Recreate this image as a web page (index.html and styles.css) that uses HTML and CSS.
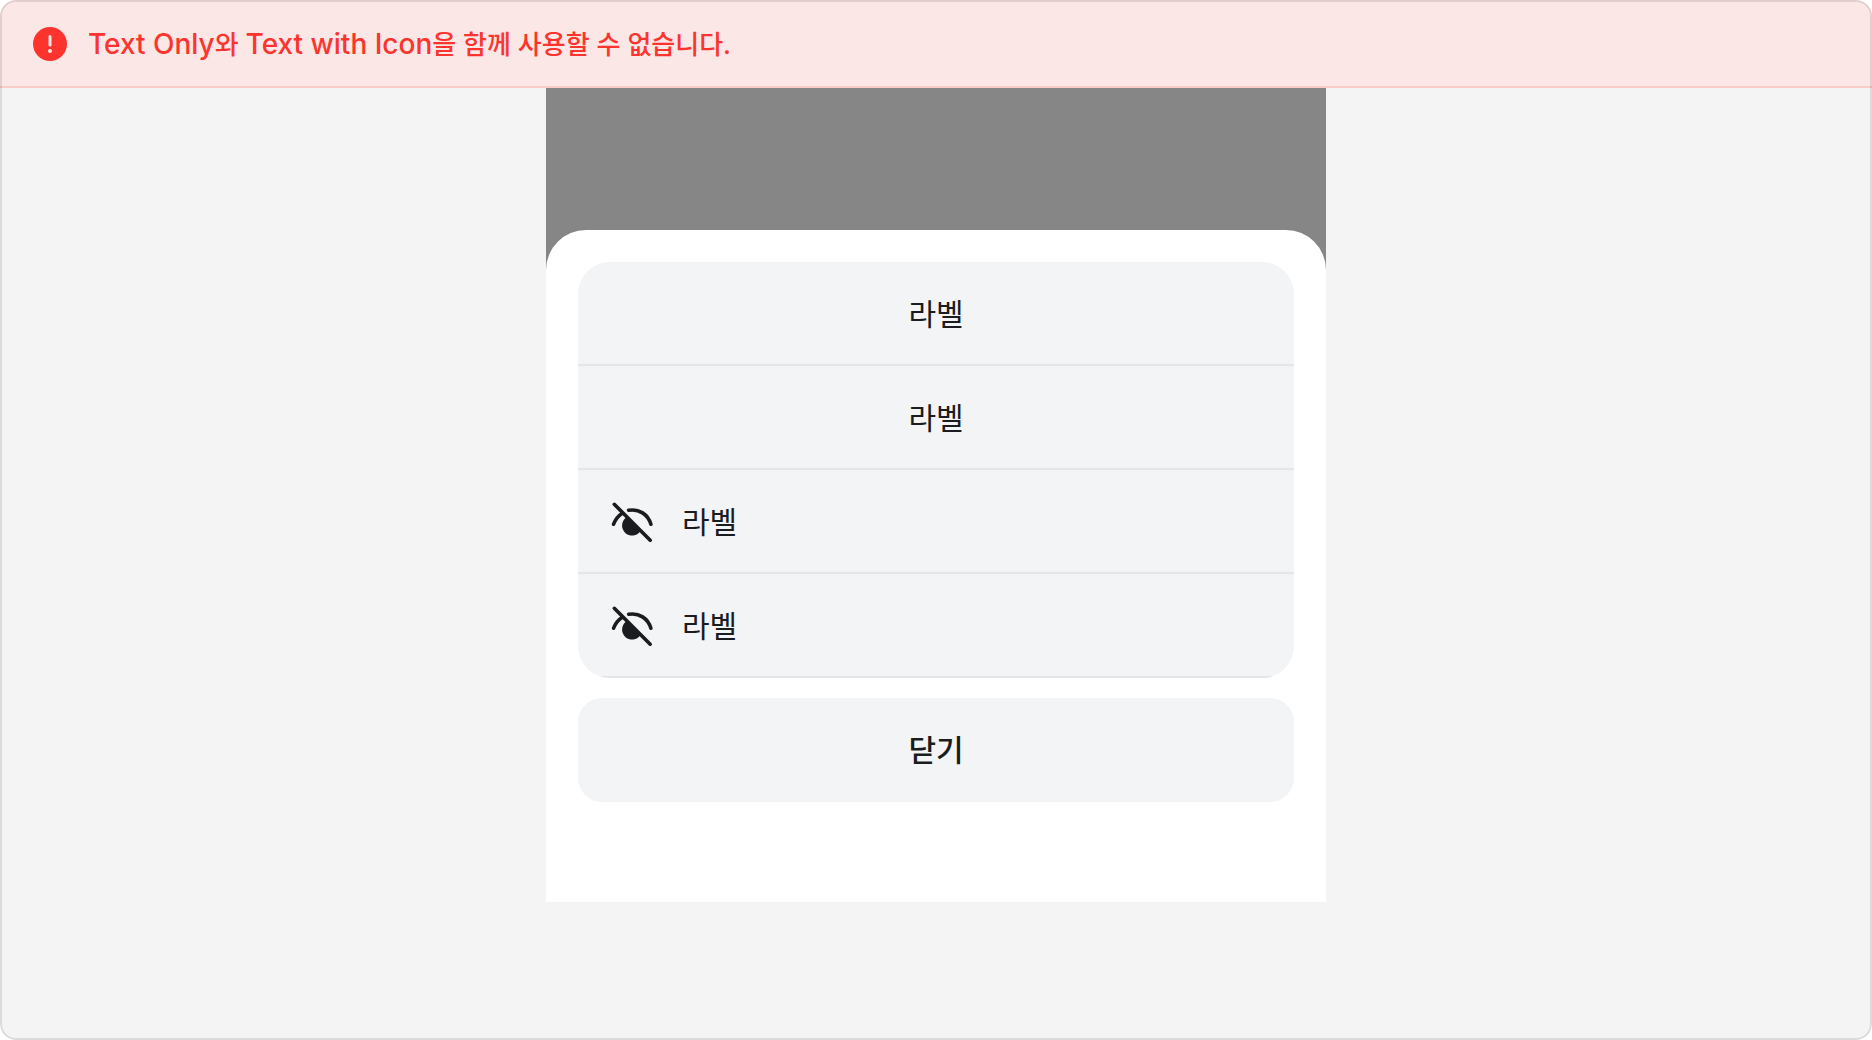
FILE: index.html
```
<!DOCTYPE html>
<html lang="ko">
<head>
  <meta charset="UTF-8">
  <title>Action Sheet</title>
  <meta name="viewport" content="width=device-width, initial-scale=1.0">
  <link rel="stylesheet" href="styles.css">
</head>
<body>

  <svg class="sprite" aria-hidden="true">
    <symbol id="eye-off" viewBox="0 0 44 44">
      <path d="M17 17A10 10 0 1 0 30.7 30.7Z" fill="currentColor"/>
      <path d="M4.3 4.3L40.2 40.2M3.6 24.2C5.2 19.8 8.2 15.8 12.3 13.2M18.6 10.3C29 8.4 38 14.4 40.9 24.2" fill="none" stroke="currentColor" stroke-width="3.6" stroke-linecap="round"/>
    </symbol>
  </svg>

  <main class="frame">
    <div class="banner" role="alert">
      <svg class="banner-icon" viewBox="0 0 34 34" aria-hidden="true">
        <circle cx="17" cy="17" r="17" fill="currentColor"/>
        <path d="M17 9.4V18" stroke="#fbe7e6" stroke-width="3" stroke-linecap="round"/>
        <circle cx="17" cy="24" r="2" fill="#fbe7e6"/>
      </svg>
      <p><span lang="en">Text Only</span>와 <span lang="en">Text with Icon</span>을 함께 사용할 수 없습니다.</p>
    </div>

    <div class="dim">
      <div class="sheet">
        <div class="list">
          <button class="item">라벨</button>
          <button class="item">라벨</button>
          <button class="item with-icon"><svg class="item-icon" aria-hidden="true"><use href="#eye-off"/></svg>라벨</button>
          <button class="item with-icon"><svg class="item-icon" aria-hidden="true"><use href="#eye-off"/></svg>라벨</button>
        </div>
        <button class="close">닫기</button>
      </div>
    </div>
  </main>

</body>
</html>
```
FILE: styles.css
```
:root{
  --bg:#f4f4f4;--dim:#868686;--sheet:#fff;--fill:#f3f4f6;
  --line:#e4e5e7;--txt:#1a1c20;--danger:#fc342d
}
*{box-sizing:border-box;margin:0;padding:0}
body{
  font-family:Inter,'Noto Sans CJK KR',sans-serif;
  background:#fff;color:var(--txt)
}
.sprite{display:none}
.frame{
  position:relative;min-height:100vh;
  display:flex;flex-direction:column;align-items:center;
  background:var(--bg);border-radius:16px;overflow:hidden
}
/* outline is drawn over the banner */
.frame::after{
  content:'';position:absolute;inset:0;
  border:2px solid rgba(0,0,0,.1);border-radius:16px;pointer-events:none
}
.banner{
  width:100%;min-height:88px;padding:0 33px;
  display:flex;align-items:center;gap:21px;
  background:#fbe7e6;color:var(--danger);box-shadow:inset 0 -2px #fbcbc9;
  font-size:26px;font-weight:500;line-height:36px
}
.banner [lang=en]{font-size:28px}
.banner-icon{width:34px;height:34px;flex:none}
.dim{width:100%;max-width:780px;padding-top:142px;background:var(--dim)}
.sheet{
  padding:32px 32px 100px;background:var(--sheet);
  border-radius:40px 40px 0 0
}
.list{border-radius:32px;overflow:hidden;margin-bottom:20px}
button{
  width:100%;height:104px;padding:0 32px;border:none;
  display:flex;align-items:center;justify-content:center;
  background:var(--fill);color:var(--txt);
  font-family:inherit;font-size:30px;line-height:40px;cursor:pointer
}
.item{box-shadow:inset 0 -2px var(--line)}
.with-icon{justify-content:flex-start;gap:28px}
.item-icon{width:44px;height:44px;flex:none}
.close{border-radius:24px;font-weight:500}
```
